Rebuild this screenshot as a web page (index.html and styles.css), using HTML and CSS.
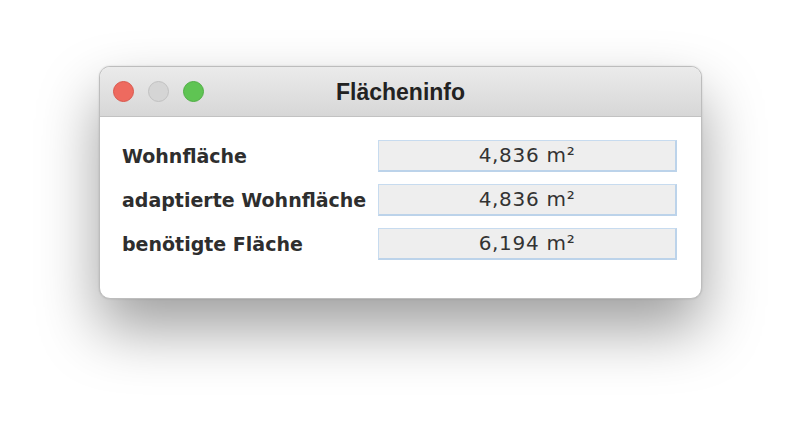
FILE: index.html
```html
<!DOCTYPE html>
<html lang="de">
<head>
<meta charset="utf-8">
<title>Flächeninfo</title>
<link rel="stylesheet" href="styles.css">
</head>
<body>
<div class="window">
  <div class="titlebar">
    <div class="lights">
      <span class="light close"></span>
      <span class="light minimize"></span>
      <span class="light zoom"></span>
    </div>
    <div class="title">Flächeninfo</div>
  </div>
  <div class="content">
    <div class="label">Wohnfläche</div>
    <div class="field">4,836 m²</div>
    <div class="label">adaptierte Wohnfläche</div>
    <div class="field">4,836 m²</div>
    <div class="label">benötigte Fläche</div>
    <div class="field">6,194 m²</div>
  </div>
</div>
</body>
</html>
```
FILE: styles.css
```css
html, body {
  margin: 0;
  padding: 0;
  background: #ffffff;
}
body {
  width: 800px;
  height: 427px;
  overflow: hidden;
  padding-top: 66px;
  box-sizing: border-box;
}
.window {
  width: 603px;
  margin: 0 0 0 99px;
  border: 1px solid #bdbdbd;
  border-radius: 11px;
  background: #ffffff;
  box-shadow: 0 30px 60px rgba(0, 0, 0, 0.38), 0 0 2px rgba(0,0,0,0.15);
  overflow: hidden;
  box-sizing: border-box;
}
.titlebar {
  position: relative;
  height: 49px;
  background: linear-gradient(#ebebeb, #d7d7d7);
  border-bottom: 1px solid #c2c2c2;
  display: flex;
  align-items: center;
  justify-content: center;
}
.lights {
  position: absolute;
  left: 13px;
  top: 14px;
  display: flex;
  gap: 14px;
}
.light {
  width: 21px;
  height: 21px;
  border-radius: 50%;
  box-sizing: border-box;
}
.close {
  background: #ee6a5f;
  border: 1px solid #d9574c;
}
.minimize {
  background: #d5d5d5;
  border: 1px solid #c1c1c1;
}
.zoom {
  background: #5fc453;
  border: 1px solid #4fae44;
}
.title {
  font-family: "Liberation Sans", Arial, sans-serif;
  font-weight: bold;
  font-size: 23px;
  color: #222222;
  margin-top: 1px;
}
.content {
  display: grid;
  grid-template-columns: 1fr 299px;
  row-gap: 12px;
  padding: 23px 24px 38px 22px;
  align-items: center;
}
.label {
  font-family: "DejaVu Sans", sans-serif;
  font-weight: bold;
  font-size: 19px;
  color: #2e2e2e;
}
.field {
  height: 32px;
  box-sizing: border-box;
  background: #eeeeee;
  border-top: 1px solid #c7dbef;
  border-left: 1px solid #c7dbef;
  border-right: 2px solid #bcd3ea;
  border-bottom: 2px solid #bcd3ea;
  font-family: "DejaVu Sans", sans-serif;
  font-size: 20px;
  letter-spacing: 0.7px;
  color: #333333;
  display: flex;
  align-items: center;
  justify-content: center;
  padding-bottom: 1px;
}
```
